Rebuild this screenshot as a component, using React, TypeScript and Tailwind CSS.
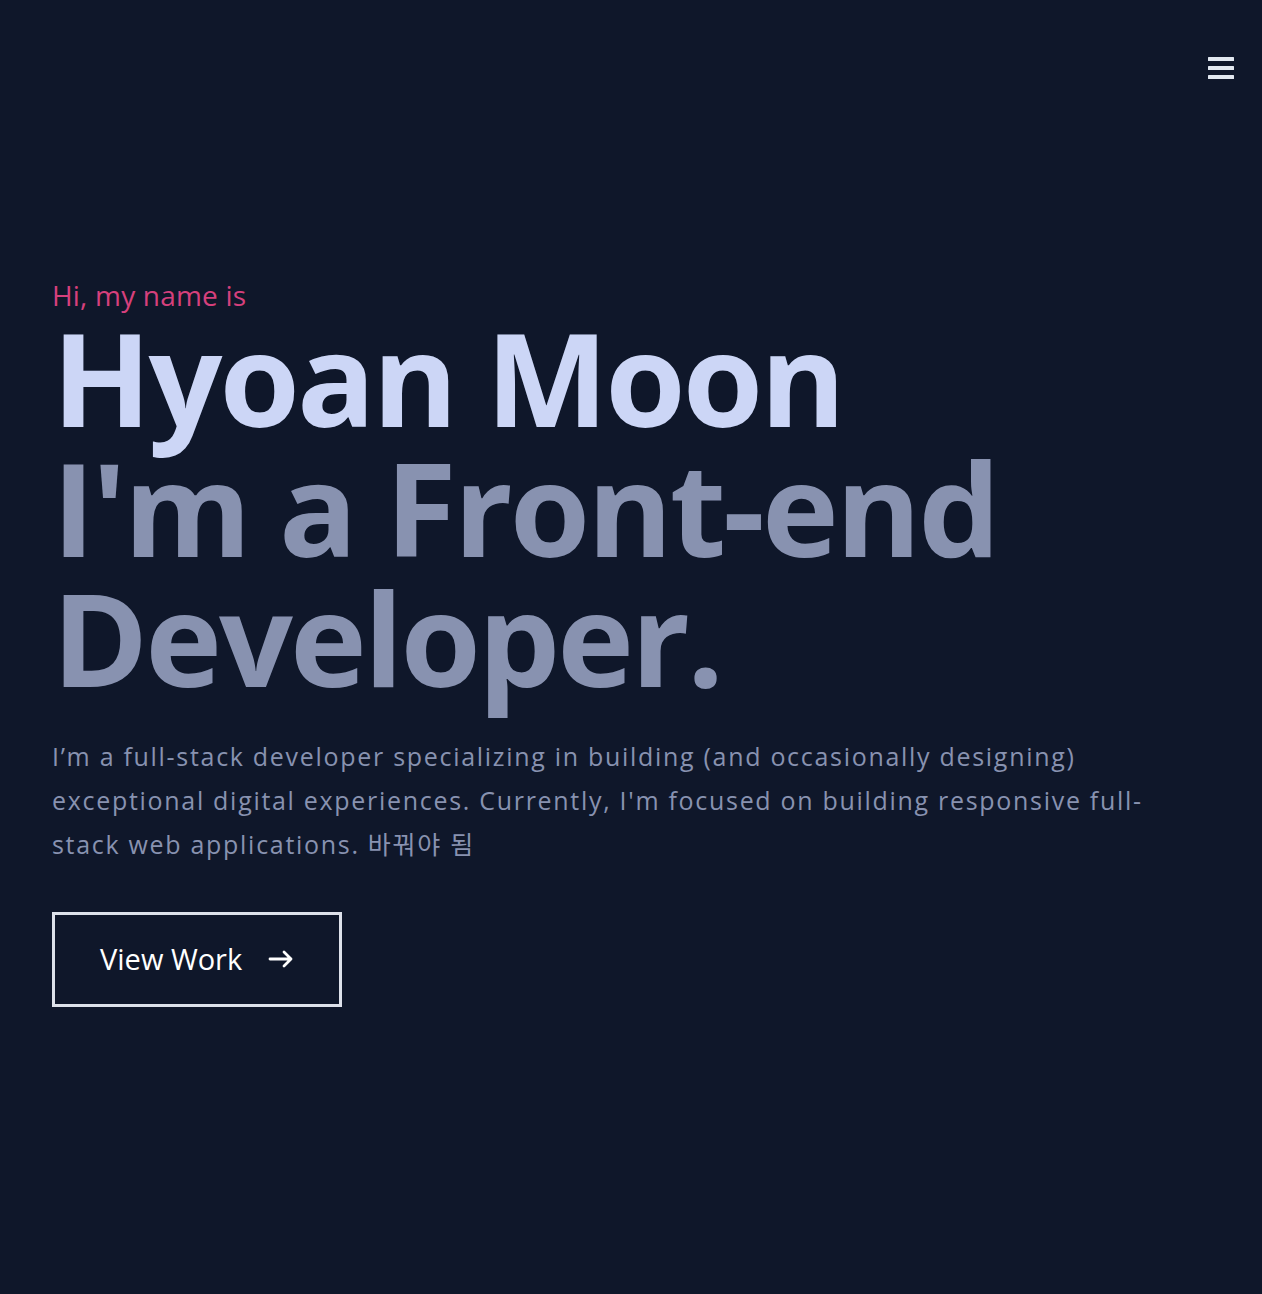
import React from 'react';

const font = { fontFamily: '"Open Sans", "Noto Sans CJK KR", sans-serif' };

const MenuIcon = () => (
  <svg width="26" height="23" viewBox="0 0 26 23" fill="currentColor">
    <rect x="0" y="0" width="26" height="4" rx="0.5" />
    <rect x="0" y="9" width="26" height="4" rx="0.5" />
    <rect x="0" y="18" width="26" height="4" rx="0.5" />
  </svg>
);

const ArrowIcon = () => (
  <svg width="26" height="18" viewBox="0 0 26 18" fill="none" stroke="currentColor" strokeWidth={2.8} strokeLinecap="round" strokeLinejoin="round">
    <path d="M2 9h21M16 2l7 7-7 7" />
  </svg>
);

export default function App() {
  return (
    <div className="relative min-h-screen bg-[#0f172a] text-[#ccd6f6]" style={font}>
      {/* Nav */}
      <header className="absolute top-0 right-0 pt-[57px] pr-[28px]">
        <button className="text-[#e2e8f0]" aria-label="menu">
          <MenuIcon />
        </button>
      </header>

      {/* Hero */}
      <main className="min-h-screen flex flex-col justify-center px-[52px] pb-[12px]">
        <p className="text-[28px] leading-[38px] text-[#d6407c] tracking-[0.2px]">Hi, my name is</p>
        <h1 className="mt-[-2px] text-[130px] leading-[130px] font-bold tracking-[-3px]">
          <span className="block text-[#ccd6f6]">Hyoan Moon</span>
          <span className="block text-[#8892b0]">I'm a Front-end Developer.</span>
        </h1>
        <p className="mt-[32px] text-[25px] leading-[44px] tracking-[1.7px] text-[#8892b0]">
          I’m a full-stack developer specializing in building (and occasionally designing) exceptional digital
          experiences. Currently, I'm focused on building responsive full-stack web applications. 바꿔야 됨
        </p>
        <div className="mt-[46px]">
          <button className="flex items-center gap-[26px] border-[3px] border-[#dde1ea] w-[290px] h-[95px] pl-[45px] text-[29px] text-white">
            View Work
            <ArrowIcon />
          </button>
        </div>
      </main>
    </div>
  );
}
